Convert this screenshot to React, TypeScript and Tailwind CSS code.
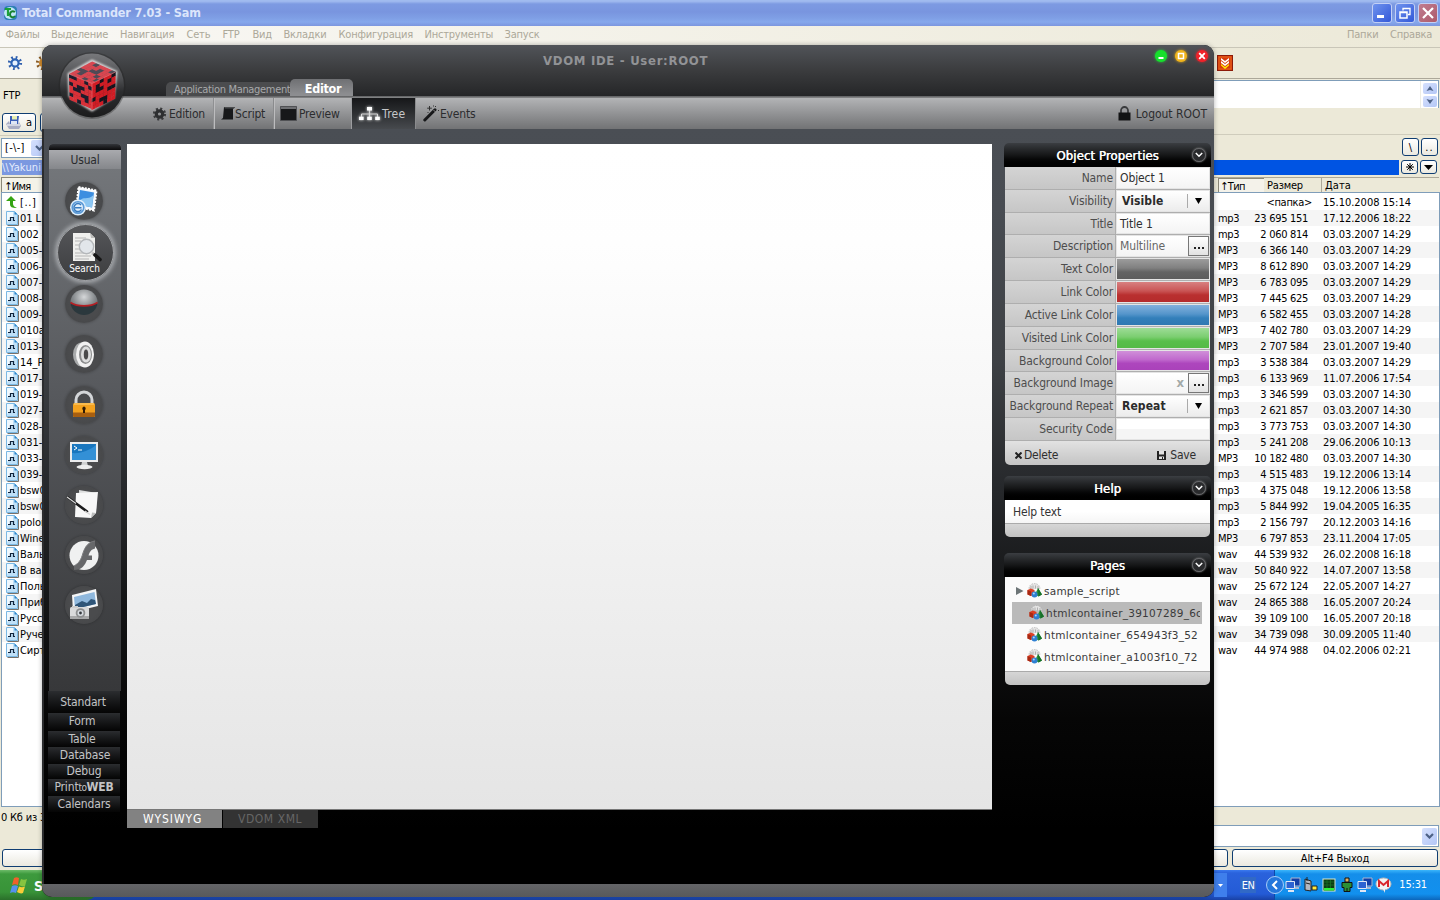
import React from "react";

const UI = "font-['DejaVu_Sans_Condensed','DejaVu_Sans',sans-serif]";

const menu = [
  ["Файлы", "w-[45.5px]"],
  ["Выделение", "w-[69px]"],
  ["Навигация", "w-[66.5px]"],
  ["Сеть", "w-[36px]"],
  ["FTP", "w-[30px]"],
  ["Вид", "w-[31px]"],
  ["Вкладки", "w-[55px]"],
  ["Конфигурация", "w-[86px]"],
  ["Инструменты", "w-[80px]"],
  ["Запуск", "w-[50px]"],
];

const names = [
  "01 L.", "002 -", "005-", "006-", "007-", "008-", "009-", "010a", "013-", "14_P", "017-", "019-", "027-", "028-",
  "031-", "033-", "039-", "bsw0", "bsw0", "polon", "Wine", "Валь", "В ва", "Поль", "Приб", "Русс", "Руче", "Сирт",
];

const files = [
  ["", "<папка>", "15.10.2008 15:14"],
  ["mp3", "23 695 151", "17.12.2006 18:22"],
  ["mp3", "2 060 814", "03.03.2007 14:29"],
  ["MP3", "6 366 140", "03.03.2007 14:29"],
  ["MP3", "8 612 890", "03.03.2007 14:29"],
  ["MP3", "6 783 095", "03.03.2007 14:29"],
  ["MP3", "7 445 625", "03.03.2007 14:29"],
  ["MP3", "6 582 455", "03.03.2007 14:28"],
  ["MP3", "7 402 780", "03.03.2007 14:29"],
  ["MP3", "2 707 584", "23.01.2007 19:40"],
  ["mp3", "3 538 384", "03.03.2007 14:29"],
  ["mp3", "6 133 969", "11.07.2006 17:54"],
  ["mp3", "3 346 599", "03.03.2007 14:30"],
  ["mp3", "2 621 857", "03.03.2007 14:30"],
  ["mp3", "3 773 753", "03.03.2007 14:30"],
  ["mp3", "5 241 208", "29.06.2006 10:13"],
  ["MP3", "10 182 480", "03.03.2007 14:30"],
  ["mp3", "4 515 483", "19.12.2006 13:14"],
  ["mp3", "4 375 048", "19.12.2006 13:58"],
  ["mp3", "5 844 992", "19.04.2005 16:35"],
  ["mp3", "2 156 797", "20.12.2003 14:16"],
  ["MP3", "6 797 853", "23.11.2004 17:05"],
  ["wav", "44 539 932", "26.02.2008 16:18"],
  ["wav", "50 840 922", "14.07.2007 13:58"],
  ["wav", "25 672 124", "22.05.2007 14:27"],
  ["wav", "24 865 388", "16.05.2007 20:24"],
  ["wav", "39 109 100", "16.05.2007 20:18"],
  ["wav", "34 739 098", "30.09.2005 11:40"],
  ["wav", "44 974 988", "04.02.2006 02:21"],
];

const TITLE_BG =
  "bg-[linear-gradient(to_bottom,#9db9ee_0px,#a3bdf0_1px,#7d9ae2_4px,#7995df_12px,#7f9fe5_18px,#86a8ec_22px,#7c96de_26px)]";

function Title() {
  const box = "w-[20px] h-[20px] rounded-[3px] border border-[#c3d0f5] flex items-center justify-center";
  return (
    <div className={`h-[26px] shrink-0 flex items-center pl-[3px] pr-[2px] ${TITLE_BG}`}>
      <svg width="15" height="16" viewBox="0 0 15 16" className="shrink-0">
        <rect x="1" y="1" width="13" height="14" rx="4" fill="#2c7fb5" />
        <circle cx="7" cy="8" r="6" fill="#bfe6f6" />
        <path d="M2 4h6M5 4v7" stroke="#1ba03a" strokeWidth="2.2" />
        <path d="M12 7c-3-2-5 0-5 2.500s3 4 5 1.500" stroke="#17822f" strokeWidth="2" fill="none" />
      </svg>
      <span className="ml-[4px] text-[12.5px] font-bold text-[#dbe5fb] whitespace-nowrap tracking-[-0.13px]">Total Commander 7.03 - Sam</span>
      <div className="ml-auto flex gap-[3px]">
        <div className={`${box} bg-[linear-gradient(135deg,#6f93ee,#3358d8)]`}>
          <div className="w-[7px] h-[3px] bg-white mt-[7px] mr-[4px]" />
        </div>
        <div className={`${box} bg-[linear-gradient(135deg,#6f93ee,#3358d8)]`}>
          <svg width="12" height="12" viewBox="0 0 12 12" fill="none" stroke="#fff">
            <path d="M4 3.500V1.500h7v6H9" strokeWidth="1.300" />
            <path d="M1 5h7v6H1z M1 5.500h7" strokeWidth="1.500" />
          </svg>
        </div>
        <div className={`${box} bg-[linear-gradient(135deg,#c07d90,#ad5a6a)]`}>
          <svg width="12" height="12" viewBox="0 0 12 12" stroke="#fff" strokeWidth="2.200">
            <path d="M1 1l10 10M11 1L1 11" />
          </svg>
        </div>
      </div>
    </div>
  );
}

function XpButton({ children, className }: { children?: React.ReactNode; className: string }) {
  return (
    <div className={`rounded-[3px] border border-[#0f3d72] bg-gradient-to-b from-white to-[#ebe9e0] flex items-center justify-center shrink-0 ${className}`}>
      {children}
    </div>
  );
}

function Chevron({ solid = false, up = false, className = "" }: { solid?: boolean; up?: boolean; className?: string }) {
  return (
    <div className={`rounded-[2px] bg-gradient-to-br from-[#d5e0fd] to-[#b4c7f6] flex items-center justify-center ${className}`}>
      {solid ? (
        <svg width="8" height="5" viewBox="0 0 8 5" fill="#4d6185"><path d={up ? "M.5 5L4 0l3.500 5L4 4z" : "M.5 0L4 5 7.500 0 4 1z"} /></svg>
      ) : (
        <svg width="9" height="6" viewBox="0 0 9 6" fill="none" stroke="#4d6185" strokeWidth="2.200"><path d="M1 1l3.500 3.500L8 1" /></svg>
      )}
    </div>
  );
}

function FileIcon() {
  return (
    <svg width="13" height="15" viewBox="0 0 13 15" className="shrink-0">
      <path d="M1.500 14.500h11V4" stroke="#77716a" fill="none" />
      <path d="M.5.5h8l3 3v10H.5z" fill="#bfe0f8" stroke="#7ab8e4" />
      <path d="M1 1h6v5L1 11z" fill="#eff8fe" />
      <path d="M8.500.5v3h3z" fill="#2d86cc" />
      <path d="M2 9.500h2.500v-3h3v3H9" stroke="#10233c" strokeWidth="1.200" fill="none" />
    </svg>
  );
}

function LeftSide() {
  return (
    <div className="w-[42px] shrink-0 flex flex-col text-black">
      <div className="h-[31px] shrink-0 flex items-center pl-[8px] border-b border-[#aca899] bg-[#f6f5f0]">
        <svg width="34" height="16" viewBox="0 0 34 16" className="shrink-0">
          <g fill="none">
            <circle cx="7" cy="8" r="5.600" stroke="#2f5fae" strokeWidth="3" strokeDasharray="1.700 2.700" />
            <circle cx="7" cy="8" r="3.600" stroke="#2b62b4" strokeWidth="2.200" fill="#e5f1ff" />
            <circle cx="35" cy="8" r="5.600" stroke="#8a5a20" strokeWidth="3" strokeDasharray="1.700 2.700" />
            <circle cx="35" cy="8" r="4" fill="#d08a2c" />
          </g>
        </svg>
      </div>
      <div className="h-[31px] shrink-0 pl-[3px] pt-[10px] text-[11px] leading-[14px]">FTP</div>
      <div className="h-[25px] shrink-0 flex gap-[4px] pt-[3px] pl-[2px]">
        <XpButton className="w-[34px] h-[19px] gap-[4px]">
          <svg width="16" height="15" viewBox="0 0 16 15">
            <path d="M4 1h9l-1 8H4z" fill="#3c5fb8" />
            <path d="M6 1h5v3.500H6z" fill="#e8f0b0" />
            <path d="M5 6h6v4H5z" fill="#dfe6f5" />
            <path d="M0 9l3-3 1 3h8l1-2 2 4-2 3H3z" fill="#a9adc4" />
            <path d="M1 10h13" stroke="#fff" />
          </svg>
          <span className="text-[11px] pt-[2px]">a</span>
        </XpButton>
        <XpButton className="w-[34px] h-[19px]" />
      </div>
      <div className="h-[24px] shrink-0 border-t border-[#cfccbc] pt-[2px] pl-[1px]">
        <div className="w-[49px] h-[20px] border border-[#7f9db9] bg-white flex items-center pl-[3px]">
          <span className="text-[11px] w-[26px] shrink-0 tracking-[0.3px]">[-\-]</span>
          <Chevron className="w-[16px] h-[16px] shrink-0" />
        </div>
      </div>
      <div className="h-[18px] shrink-0 pt-[1px] pl-[2px]">
        <div className="h-[15px] bg-[#7b98e0] text-[#e4ecfd] text-[11px] leading-[16px] tracking-[0.15px] whitespace-nowrap">\\Yakunin</div>
      </div>
      <div className="h-[15px] shrink-0 ml-[1px] border-l border-t border-[#8b8878] pl-[2px] bg-[#f4f2e8] text-[11px] leading-[17px] tracking-[-0.6px] whitespace-nowrap">↑Имя</div>
      <div className="h-[615px] shrink-0 ml-[1px] border-l border-y border-[#7f9db9] bg-white text-[11px] leading-[16px] tracking-[-0.05px]">
        <div className="h-[17px] pt-[1px] flex items-center pl-[4px] whitespace-nowrap">
          <svg width="11" height="12" viewBox="0 0 11 12" className="shrink-0">
            <path d="M5 0l5 5H7v3c0 2 2 3 4 4-5 0-7-1-7-4V5H0z" fill="#35a413" />
          </svg>
          <span className="ml-[3px] pt-[1px] tracking-[0.6px]">[..]</span>
        </div>
        {names.map((n, i) => (
          <div key={i} className={`h-[16px] flex items-center pl-[4px] whitespace-nowrap ${i % 2 ? "bg-white" : "bg-[#f5f5f5]"}`}>
            <FileIcon />
            <span className="ml-[1px] pt-[1px]">{n}</span>
          </div>
        ))}
      </div>
      <div className="h-[42px] shrink-0 pl-[1px] pt-[3px] text-[11px] leading-[16px] tracking-[-0.2px] whitespace-nowrap">0 Кб из 3</div>
      <XpButton className="w-[60px] h-[18px] ml-[2px]" />
    </div>
  );
}

function RightSide() {
  return (
    <div className="w-[226px] shrink-0 flex flex-col overflow-hidden text-black">
      <div className="h-[31px] shrink-0 flex items-center pl-[3px] border-b border-[#aca899]">
        <svg width="16" height="16" viewBox="0 0 16 16">
          <rect x=".5" y=".5" width="15" height="15" fill="#d63a0c" stroke="#8d1a08" />
          <rect x="2" y="2" width="12" height="12" fill="none" stroke="#e8661c" />
          <path d="M4 3l4 3 4-3v2L8 8 4 5zM4 6l4 3 4-3v2l-4 3-4-3z" fill="#fff" />
          <path d="M4 9l4 3 4-3v1.500L8 14l-4-3.500z" fill="#ffe60a" />
        </svg>
      </div>
      <div className="h-[31px] shrink-0 pr-[1px]">
        <div className="h-[28px] mt-[1px] bg-white border-t border-r border-[#7f9db9] flex justify-end">
          <div className="w-[18px] flex flex-col items-center gap-[2px] pt-[2px] border-l border-[#eeede5]">
            <Chevron solid up className="w-[14px] h-[11px]" />
            <Chevron solid className="w-[14px] h-[11px]" />
          </div>
        </div>
      </div>
      <div className="h-[25px] shrink-0 border-b border-[#cfccbc]" />
      <div className="h-[24px] shrink-0 flex justify-end gap-[2px] pt-[3px] pr-[2px] text-[11px]">
        <XpButton className="w-[17px] h-[18px] pt-[3px]">\</XpButton>
        <XpButton className="w-[17px] h-[18px] pt-[3px] tracking-[1px]">..</XpButton>
      </div>
      <div className="h-[18px] shrink-0 flex pt-[1px] pr-[2px]">
        <div className="w-[185px] h-[15px] bg-[#0054e3] mr-[2px] shrink-0" />
        <XpButton className="w-[17px] h-[14px] mr-[2px]">
          <svg width="8" height="8" viewBox="0 0 8 8" stroke="#000">
            <path d="M4 0v8M0 4h8M1.200 1.200l5.600 5.600M6.800 1.200L1.200 6.800" />
          </svg>
        </XpButton>
        <XpButton className="w-[17px] h-[14px]">
          <svg width="9" height="5" viewBox="0 0 9 5"><path d="M0 0h9L4.500 5z" /></svg>
        </XpButton>
      </div>
      <div className="h-[15px] shrink-0 flex border-t border-[#aca899] text-[11px] leading-[16px] tracking-[-0.2px] whitespace-nowrap mr-[1px]">
        <div className="w-[5px] border-r border-[#8b8878]" />
        <div className="w-[45px] border-t border-[#8b8878] bg-[#f4f2ea] pl-[1px] tracking-[-0.6px]">↑Тип</div>
        <div className="w-[58px] border-r border-[#aca899] pl-[3px]">Размер</div>
        <div className="pl-[3px] tracking-[0.1px]">Дата</div>
      </div>
      <div className="h-[615px] shrink-0 border-r border-y border-[#7f9db9] bg-white text-[11px] leading-[17px] tracking-[-0.3px] pt-[1px]">
        {files.map((f, i) => (
          <div key={i} className={`h-[16px] flex whitespace-pre ${i % 2 ? "bg-[#f5f5f5]" : "bg-white"}`}>
            <div className="w-[34px] pl-[4px] shrink-0">{f[0]}</div>
            <div className={`w-[60px] text-right shrink-0 ${i === 0 ? "translate-x-[4px]" : ""}`}>{f[1]}</div>
            <div className="pl-[15px] tracking-[-0.02px]">{f[2]}</div>
          </div>
        ))}
      </div>
      <div className="h-[18px] shrink-0" />
      <div className="h-[22px] shrink-0 mr-[1px] border border-l-0 border-[#7f9db9] bg-white flex justify-end items-center pr-[1px]">
        <Chevron className="w-[15px] h-[17px]" />
      </div>
      <div className="flex gap-[4px] pt-[2px] text-[11px] tracking-[-0.15px] -ml-[20px]">
        <XpButton className="w-[34px] h-[18px]" />
        <XpButton className="w-[206px] h-[18px] pt-[2px]">Alt+F4 Выход</XpButton>
      </div>
    </div>
  );
}

function Monitors() {
  return (
    <svg width="16" height="16" viewBox="0 0 16 16">
      <path d="M6 1h9v8H6z" fill="#123fa8" stroke="#a9b6d0" />
      <path d="M1 4.500h8.500v7H1z" fill="#2b62d2" stroke="#dfe7f5" />
      <path d="M3 14h6" stroke="#dfe7f5" strokeWidth="2" />
      <path d="M10 11h4" stroke="#a9b6d0" strokeWidth="2" />
    </svg>
  );
}

function Taskbar() {
  return (
    <div className="h-[30px] shrink-0 mt-auto flex bg-[linear-gradient(to_bottom,#3a7af0_0px,#2a62dc_3px,#245bd6_24px,#1941a5_30px)]">
      <div className="w-[97px] h-full shrink-0 flex items-center pl-[10px] rounded-r-[10px] bg-[linear-gradient(to_bottom,#6dbb69_0px,#3d9a3d_4px,#389338_22px,#2a6f2a_30px)]">
        <svg width="19" height="17" viewBox="0 0 19 17">
          <path d="M4 1c2-1 3-1 5 0L8 8C6 7 4 7 2 8z" fill="#f0602c" />
          <path d="M11 2c2 1 4 1 6 0l-2 7c-2 1-4 0-6-1z" fill="#86c440" />
          <path d="M2 9c2-1 4-1 6 0l-2 7c-2-1-4-1-6 0z" fill="#5591ef" />
          <path d="M9 9.500c2 1 4 1 6 0l-2 6.500c-2 1-4 0-6-1z" fill="#f8cc38" />
        </svg>
        <span className="ml-[5px] text-white font-bold text-[14px] pt-[2px]">Start</span>
      </div>
      <div className="ml-auto w-[226px] h-full flex items-center">
        <div className="w-[13px] h-[24px] bg-[#3f7fec] flex items-center justify-center">
          <svg width="5" height="3" viewBox="0 0 5 3"><path d="M0 0h5L2.500 3z" fill="#fff" /></svg>
        </div>
        <div className="w-[16px] h-[16px] ml-[13px] mr-[19px] bg-[#3169c6] text-white text-[11px] leading-[17px] tracking-[-0.7px] text-center">EN</div>
        <div className="h-full flex-1 flex items-center -ml-[1px] pr-[13px] border-l border-[#0d48a8] bg-[linear-gradient(to_bottom,#3ab5fb_0px,#148eea_4px,#1290ee_24px,#0c66bb_30px)]">
          <div className="-ml-[9px] w-[18px] h-[18px] shrink-0 rounded-full border border-[#a8cdf8] bg-[#2477dc] flex items-center justify-center">
            <svg width="8" height="10" viewBox="0 0 8 10" fill="none" stroke="#fff" strokeWidth="2"><path d="M6 1L2 5l4 4" /></svg>
          </div>
          <div className="flex gap-[2px] items-center shrink-0 ml-[1px]">
            <Monitors />
            <svg width="16" height="16" viewBox="0 0 16 16">
              <path d="M2 2l6 2v10l-6-1z" fill="#b5b8c0" stroke="#222" />
              <path d="M4 0v4M3 6l4 1" stroke="#222" />
              <path d="M9 9h5v4H9z" fill="#ffe93b" stroke="#222" />
            </svg>
            <svg width="16" height="16" viewBox="0 0 16 16">
              <rect x="2" y="2" width="12" height="12" fill="#0b3d13" stroke="#d8e8d0" />
              <path d="M3 11h10v2.500H3z" fill="#2bf03a" />
              <path d="M3 5h10M3 8h10M6 3v8M9.500 3v8" stroke="#1d7a2a" strokeWidth=".7" />
            </svg>
            <svg width="16" height="16" viewBox="0 0 16 16">
              <path d="M6 1h4v4H6z" fill="#e0b064" stroke="#111" />
              <path d="M3 5.500h10v5h-2v4H5v-4H3z" fill="#2b8f35" stroke="#111" />
              <path d="M8 11v4" stroke="#111" />
            </svg>
            <Monitors />
            <svg width="17" height="16" viewBox="0 0 17 16">
              <ellipse cx="8.500" cy="7" rx="7.500" ry="6" fill="#f3f3f3" stroke="#b9babd" />
              <path d="M4 10V4l4.500 4L13 4v6" stroke="#d9262c" strokeWidth="2" fill="none" />
              <path d="M8 12l2 4v-4z" fill="#eee" />
            </svg>
          </div>
          <span className="ml-auto text-white text-[11px] tracking-[-0.15px] pt-[1px]">15:31</span>
        </div>
      </div>
    </div>
  );
}

const topFace = ["RRKRRR", "RKKRRK", "RRRKRR", "KRRKKR", "RRKRRR", "RKRRRK"];
const leftFace = ["KKRRKR", "RRRRRK", "KRKKRR", "RKKRRR", "RRRKKR", "KRRRKR", "RRKRRR"];
const rightFace = ["RRKRRK", "RKRRKR", "RKKRRR", "RRRRKK", "KRRRRR", "RRKKRR", "RRRKRR"];

function Face({ rows, m, dark, light }: { rows: string[]; m: string; dark: string; light: string }) {
  return (
    <g transform={m}>
      {rows.flatMap((r, y) =>
        r.split("").map((c, x) => (
          <rect key={`${x}-${y}`} x={x / r.length} y={y / rows.length} width={1 / r.length + 0.01} height={1 / rows.length + 0.01} fill={c === "K" ? dark : light} />
        )),
      )}
    </g>
  );
}

function Logo() {
  return (
    <svg width="70" height="70" viewBox="0 0 70 70" className="absolute left-[15px] top-[5px]">
      <defs>
        <linearGradient id="lg" x1="0" y1="0" x2="0" y2="1">
          <stop offset="0" stopColor="#77787b" />
          <stop offset=".4" stopColor="#4d4e51" />
          <stop offset=".6" stopColor="#2c2d2f" />
          <stop offset="1" stopColor="#1b1b1c" />
        </linearGradient>
        <filter id="gl" x="-30%" y="-30%" width="160%" height="160%"><feGaussianBlur stdDeviation="1.300" /></filter>
      </defs>
      <circle cx="35" cy="35.500" r="33.500" fill="#222" opacity=".35" />
      <circle cx="35" cy="35.500" r="32" fill="url(#lg)" />
      <path d="M12 24L35 11l24 11-3 25-21 13-22-14z" fill="none" stroke="#e8e8e8" strokeWidth="2.500" filter="url(#gl)" />
      <Face rows={topFace} m="matrix(23 -12.500 24 10.500 12 24)" dark="#4f4a56" light="#d84650" />
      <Face rows={leftFace} m="matrix(23 9.500 .5 25.500 12 24)" dark="#1d1d2c" light="#d83038" />
      <Face rows={rightFace} m="matrix(23.500 -11.500 -.5 26.500 35 33.500)" dark="#17131c" light="#d01c24" />
      <path d="M12 24l23 9.500L58.500 22M35 33.500V60" stroke="#f07a80" strokeWidth=".6" fill="none" />
    </svg>
  );
}

function Light({ kind }: { kind: "min" | "max" | "close" }) {
  const bg = kind === "min" ? "bg-[#16e02c] shadow-[0_0_3px_#1fd83a]" : kind === "max" ? "bg-[#f0b41c] shadow-[0_0_3px_#f0b41c]" : "bg-[#f0222a] shadow-[0_0_3px_#e8222a]";
  return (
    <div className={`w-[12px] h-[12px] rounded-full flex items-center justify-center ${bg}`}>
      <svg width="10" height="10" viewBox="0 0 10 10" stroke="#fff" fill="none">
        {kind === "min" && <path d="M2.500 7h5" strokeWidth="1.800" />}
        {kind === "max" && <rect x="2.500" y="2.500" width="5" height="5" strokeWidth="1.500" />}
        {kind === "close" && <path d="M2.200 2.200l5.600 5.600M7.800 2.200L2.200 7.800" strokeWidth="1.800" />}
      </svg>
    </div>
  );
}

function Toolbar() {
  const txt = "text-[12px] text-[#2b2c2e] tracking-[-0.2px] whitespace-nowrap";
  return (
    <div className="h-[31px] shrink-0 flex items-center pl-[103px] pr-[7px] bg-gradient-to-b from-[#b3b4b6] to-[#727375] shadow-[0_2px_5px_rgba(0,0,0,.35)]">
      <div className="w-[69px] h-full flex items-center border-r border-[#8f9092] pl-[7px]">
        <svg width="15" height="14" viewBox="0 0 15 14" fill="none">
          <circle cx="7.500" cy="7" r="5.300" stroke="#3a3b3d" strokeWidth="2.600" strokeDasharray="2 2.163" />
          <circle cx="7.500" cy="7" r="3.200" stroke="#2e2f31" strokeWidth="3.200" />
        </svg>
        <span className={`ml-[2px] ${txt}`}>Edition</span>
      </div>
      <div className="w-[60px] h-full flex items-center border-r border-[#8a8b8d] border-l border-l-[#bcbcbe] pl-[6px]">
        <svg width="14" height="15" viewBox="0 0 14 15">
          <path d="M3 1h11l-2 2v10.500H0l2-1.500z" fill="#17181a" />
          <path d="M3 1h11l-1 1.500H4z" fill="#4b4c4e" />
        </svg>
        <span className={`${txt}`}>Script</span>
      </div>
      <div className="w-[77px] h-full flex items-center border-l border-[#bcbcbe] pl-[5px]">
        <svg width="17" height="15" viewBox="0 0 17 15">
          <path d="M.5.5h16v14H.5z" fill="#17181a" stroke="#505154" />
          <path d="M1 1h15v2H1z" fill="#6e6f72" />
        </svg>
        <span className={`ml-[2px] ${txt}`}>Preview</span>
      </div>
      <div className="w-[65px] h-full flex items-center bg-gradient-to-b from-[#161719] to-[#474a4e] pl-[6px] border-l border-r border-l-[#9c9da0] border-r-[#8a8b8d]">
        <svg width="23" height="17" viewBox="0 0 23 17" className="drop-shadow-[0_0_1.5px_#ffffff]">
          <path d="M11.500 3v9M3.500 13V9h16v4" stroke="#d8d8d8" strokeWidth="1" fill="none" />
          <path d="M9 2h5v3.500H9zM1 11.700h4.600V15H1zM9.200 11.700h4.600V15H9.200zM17.200 11.700h4.600V15h-4.600z" fill="#fff" />
        </svg>
        <span className="ml-[1px] text-[12px] text-[#c6c7c9] tracking-[0.3px]">Tree</span>
      </div>
      <div className="flex items-center pl-[7px]">
        <svg width="17" height="17" viewBox="0 0 17 17">
          <path d="M1.800 15L12 4.800" stroke="#17181a" strokeWidth="3" strokeLinecap="round" />
          <path d="M10.500 5l2 2" stroke="#888" />
          <path d="M6.500 1v4.500M4.200 3.200h4.600M12 1l1 1M15 5l1 1M4.500 7l1 1M10 1h1" stroke="#333" />
        </svg>
        <span className={txt}>Events</span>
      </div>
      <div className="ml-auto flex items-center">
        <svg width="13" height="15" viewBox="0 0 13 15">
          <path d="M3 7V4.500a3.500 3.500 0 017 0V7" stroke="#3a3b3d" strokeWidth="1.800" fill="none" />
          <path d="M.5 6.500h12v8H.5z" fill="#121314" />
        </svg>
        <span className="ml-[5px] text-[12px] text-[#2b2c2e] tracking-[-0.02px] whitespace-nowrap">Logout ROOT</span>
      </div>
    </div>
  );
}

function SideIcon({ children }: { children: React.ReactNode }) {
  return (
    <div className="h-[50.2px] shrink-0 flex justify-center items-center">
      <div className="w-[38px] h-[38px] -ml-[2px] rounded-full bg-[radial-gradient(circle,#4a4b4d_55%,#434446_100%)] shadow-[0_0_3px_rgba(0,0,0,.3)] flex items-center justify-center">
        <svg width="34" height="34" viewBox="0 0 34 34" className="shrink-0 overflow-visible">{children}</svg>
      </div>
    </div>
  );
}

function Sidebar() {
  const cats = [
    ["Standart", "h-[22px] pl-0 pr-[2px]"],
    ["Form", "h-[18px] pr-[4px] pb-[2px]"],
    ["Table", "h-[16px] pr-[4px]"],
    ["Database", "h-[17px] pl-[2px]"],
    ["Debug", "h-[15px]"],
    ["PrinttoWEB", "h-[17px]"],
    ["Calendars", "h-[16px]"],
  ];
  return (
    <div className="w-[72px] shrink-0 flex flex-col">
      <div className="h-[547px] shrink-0 flex flex-col bg-gradient-to-b from-[#76797d] via-[#54565a] to-[#37383a] rounded-t-[4px] overflow-hidden">
        <div className="h-[6px] shrink-0 bg-gradient-to-b from-[#33353a] to-[#0b0b0c]" />
        <div className="h-[19px] shrink-0 mb-[7px] bg-gradient-to-b from-[#a9aaae] to-[#85878b] text-center text-[12px] leading-[21px] text-[#2a2b2d] tracking-[-0.2px]">Usual</div>
        <SideIcon>
          <g transform="translate(-.5 1)">
            <path d="M12 2l18 3.500-2.500 20L10 22z" fill="#f4f7fb" stroke="#fff" strokeWidth="2" strokeDasharray="2 1.200" />
            <path d="M13.500 5l14 2.500-2 15-14-3z" fill="#3c8ee0" />
            <path d="M12 17c5-7 9-1 15-7l-1.500 12.500-14-3z" fill="#8cc6f2" />
            <circle cx="11.500" cy="22.500" r="8" fill="#dfeefb" />
            <circle cx="11.500" cy="22.500" r="5.800" fill="none" stroke="#5b9ad8" strokeWidth="1.600" />
            <path d="M14.500 20a4 4 0 10.500 4.500M8.500 22.800h6.500" stroke="#3a7cc0" strokeWidth="1.500" fill="none" />
          </g>
        </SideIcon>
        <div className="h-[53px] shrink-0 flex justify-center items-center">
          <div className="w-[57px] h-[57px] shrink-0 rounded-full bg-gradient-to-b from-[#56575a] to-[#3c3d3f] border border-[#a4a6a9] shadow-[0_0_4px_2px_rgba(190,192,196,.75)] flex flex-col items-center">
            <svg width="30" height="32" viewBox="0 0 30 32" className="mt-[7px] ml-[4px] shrink-0">
              <path d="M1 1h17l5 5v23H1z" fill="#efefed" />
              <path d="M18 1l1 5h4z" fill="#bdbdbb" />
              <path d="M3 6h11M3 9h6M3 21h9M3 24h16M3 27h14M3 13h4M3 17h5" stroke="#b5b5b5" />
              <circle cx="14.500" cy="14.500" r="7.200" fill="#e2e6ea" stroke="#b4b7ba" strokeWidth="1.400" />
              <path d="M20 21l3 2" stroke="#bbb" strokeWidth="3" />
              <path d="M23 23l5 4.500" stroke="#161616" strokeWidth="3.600" strokeLinecap="round" />
            </svg>
            <span className="text-[10px] leading-[12px] text-white tracking-[-0.05px] -mt-[1px] mr-[1px]">Search</span>
          </div>
        </div>
        <SideIcon>
          <defs>
            <radialGradient id="ball" cx=".5" cy=".3" r=".7">
              <stop offset="0" stopColor="#d5d7d9" /><stop offset=".6" stopColor="#83878a" /><stop offset="1" stopColor="#54585b" />
            </radialGradient>
          </defs>
          <ellipse cx="17" cy="15" rx="13.500" ry="12.500" fill="url(#ball)" />
          <path d="M3.500 15.500c7 4.500 20 4.500 27 0a13.500 12.500 0 01-27 0z" fill="#2b383d" />
          <path d="M3.500 15.500c7 4.500 20 4.500 27 0" stroke="#b51f24" strokeWidth="1.600" fill="none" />
        </SideIcon>
        <SideIcon>
          <ellipse cx="14.500" cy="17.500" rx="8.500" ry="12" fill="#a9abac" />
          <ellipse cx="18" cy="17.500" rx="9" ry="13" fill="#f1f1f1" />
          <ellipse cx="18.500" cy="17.500" rx="6.500" ry="9.500" fill="#8a8b8c" />
          <ellipse cx="19" cy="17.500" rx="5" ry="8" fill="#dcdddd" />
          <ellipse cx="19" cy="17.500" rx="2.200" ry="5" fill="#4a4a4b" />
        </SideIcon>
        <SideIcon>
          <path d="M9 16V12a8 8 0 0116 0v4" stroke="#d4d6d8" strokeWidth="3" fill="none" />
          <rect x="6" y="15" width="22" height="14" rx="1.500" fill="#f4a21f" />
          <path d="M6 24.500h22v3c0 1-1 1.500-2 1.500H8c-1 0-2-.5-2-1.500z" fill="#a85f10" />
          <path d="M7 16h20" stroke="#ffd27a" />
          <path d="M17 18.500a2 2 0 011 3.500v3h-2v-3a2 2 0 011-3.500z" fill="#2e1a05" />
        </SideIcon>
        <SideIcon>
          <path d="M3 4h28v20H3z" fill="#ebeced" />
          <path d="M5 6h24v16H5z" fill="#1976be" />
          <path d="M5 15c9 1 18-3 24-8v15H5z" fill="#3f9be0" opacity=".7" />
          <path d="M7 8l3 2-3 2M11 12h4" stroke="#fff" fill="none" />
          <path d="M15 24h5l1 4h-7z" fill="#cfd1d2" />
          <ellipse cx="17.500" cy="29" rx="8" ry="2.200" fill="#eceded" />
        </SideIcon>
        <SideIcon>
          <path d="M12 2l18 3-1 20-16-1z" fill="#dddede" />
          <path d="M9 5l22-1-2 21-5 5-16-1z" fill="#f8f8f8" />
          <path d="M24 30l1-5.500 4 .5z" fill="#bcbdbd" />
          <path d="M1 9.500l19 14" stroke="#1c1c1d" strokeWidth="2.600" strokeLinecap="round" />
          <path d="M0 9l9 6.500M18 23l5 3.500" stroke="#d8d8d8" strokeWidth="1.200" />
        </SideIcon>
        <SideIcon>
          <circle cx="17" cy="17.500" r="14.500" fill="#f0f1f1" />
          <path d="M28 3c-7 1-10 6-12 12-2 7-4 10-9 13v4c8 0 11-5 13-10h5v-4.500h-3.500c1.500-4 2.500-6 6.500-7z" fill="#67686a" />
          <path d="M28 3c-7 1-10 6-12 12-2 7-4 10-9 13" stroke="#7c7d7f" fill="none" />
        </SideIcon>
        <SideIcon>
          <path d="M5 7l24-6 2 17-25 6z" fill="#f4f5f6" />
          <path d="M7 9L27.500 4l1.500 12-21 5z" fill="#8fb8dd" />
          <path d="M8 17l7-4 5 2 4-4 4 1 1 4-21 5z" fill="#2f5578" />
          <rect x="3" y="19" width="19" height="12" rx="1.500" fill="#d9dadb" />
          <path d="M5 18h6v2H5z" fill="#ccc" />
          <path d="M3 28h19v3H3z" fill="#a7a8a9" />
          <circle cx="13.500" cy="25" r="4.800" fill="#8d8f90" />
          <circle cx="13.500" cy="25" r="3" fill="#d6dbe0" />
          <circle cx="13.500" cy="25" r="1.400" fill="#34383c" />
        </SideIcon>
      </div>
      <div className="-ml-[1px] w-[72px] flex flex-col">
        {cats.map(([c, cl]) => (
          <div key={c} className={`shrink-0 flex items-center justify-center bg-gradient-to-b from-[#2b2d30] to-[#050505] text-[12px] leading-[15px] text-[#c3c4c6] tracking-[-0.15px] whitespace-nowrap ${cl}`}>
            {c === "PrinttoWEB" ? (
              <span className="tracking-[-0.15px]">Print<span className="text-[10px] tracking-[-0.5px]">to</span><b>WEB</b></span>
            ) : c}
          </div>
        ))}
      </div>
    </div>
  );
}

function PanelHead({ children }: { children: string }) {
  return (
    <div className="h-[24px] shrink-0 -mx-[1px] rounded-t-[5px] bg-gradient-to-b from-[#3b3e42] via-[#161718] to-black flex items-center justify-center relative">
      <span className="text-[13px] pt-[2px] text-white [text-shadow:0.5px_0_0_#fff] tracking-[0.1px] whitespace-nowrap">{children}</span>
      <div className="absolute right-[5px] top-[5px] w-[14px] h-[14px] rounded-full bg-[#2a2b2d] border border-[#66676a] shadow-[0_0_2px_#888] flex items-center justify-center">
        <svg width="8" height="6" viewBox="0 0 8 6" fill="none" stroke="#fff" strokeWidth="1.500"><path d="M.8 1L4 4.200 7.200 1" /></svg>
      </div>
    </div>
  );
}

const Foot = "bg-gradient-to-b from-[#d6d6d6] to-[#c2c2c2] rounded-b-[5px] border-t border-[#aaa] shrink-0";

function Select({ v }: { v: string }) {
  return (
    <div className="flex-1 flex items-center pl-[5px]">
      <b className="text-[12px] tracking-[0.1px] text-[#2b2b2b]">{v}</b>
      <div className="ml-auto w-[22px] h-[14px] border-l border-[#aaa] flex items-center justify-center">
        <svg width="7" height="6" viewBox="0 0 7 6"><path d="M0 0h7L3.500 6z" /></svg>
      </div>
    </div>
  );
}

function Dots() {
  return (
    <div className="ml-auto w-[21px] h-[20px] border border-[#777] bg-gradient-to-b from-[#fff] to-[#e2e2e2] flex items-end justify-center gap-[2px] pb-[6px]">
      <i className="w-[2px] h-[2px] bg-[#222]" />
      <i className="w-[2px] h-[2px] bg-[#222]" />
      <i className="w-[2px] h-[2px] bg-[#222]" />
    </div>
  );
}

function Properties() {
  const val = "pl-[3px] pt-[1px] text-[#2f2f2f] tracking-[-0.1px]";
  const rows: [string, React.ReactNode, string][] = [
    ["Name", <span className={val}>Object 1</span>, "bg-gradient-to-b from-white to-[#f4f4f4]"],
    ["Visibility", <Select v="Visible" />, "bg-gradient-to-b from-white to-[#ececec]"],
    ["Title", <span className={val}>Title 1</span>, "bg-gradient-to-b from-white to-[#f4f4f4]"],
    ["Description", <><span className="pl-[3px] text-[#666] tracking-[-0.1px]">Multiline</span><Dots /></>, "bg-gradient-to-b from-white to-[#f4f4f4]"],
    ["Text Color", null, "bg-[linear-gradient(to_bottom,#9c9c9c,#808080_45%,#636363_65%,#5c5c5c)]"],
    ["Link Color", null, "bg-[linear-gradient(to_bottom,#d88080,#c95454_45%,#b92f2f_65%,#b52c2c)]"],
    ["Active Link Color", null, "bg-[linear-gradient(to_bottom,#82b1dc,#5595cb_45%,#337fba_65%,#2f78b2)]"],
    ["Visited Link Color", null, "bg-[linear-gradient(to_bottom,#9edc97,#7bce70_45%,#58bf4a_65%,#54ba46)]"],
    ["Background Color", null, "bg-[linear-gradient(to_bottom,#d08fd9,#c069cd_45%,#ad46bd_65%,#aa42ba)]"],
    ["Background Image", <><span className="ml-auto mr-[4px] text-[13px] leading-[16px] font-bold text-[#a3aaa8]">x</span><div className="w-[21px] h-[20px] flex"><Dots /></div></>, "bg-gradient-to-b from-white to-[#f4f4f4]"],
    ["Background Repeat", <Select v="Repeat" />, "bg-gradient-to-b from-white to-[#ececec]"],
    ["Security Code", null, "bg-[linear-gradient(to_bottom,#fff_50%,#f5f5f5_52%)]"],
  ];
  return (
    <div className="shrink-0 flex flex-col">
      <PanelHead>Object Properties</PanelHead>
      {rows.map(([l, v, bg]) => (
        <div key={l} className="h-[22.83px] shrink-0 flex bg-[#aeaeae] text-[12px] tracking-[-0.13px] whitespace-nowrap">
          <div className="w-[110px] mb-[1px] mr-[1px] bg-gradient-to-b from-[#d4d4d4] to-[#c6c6c6] flex items-center justify-end pr-[2px] text-[#4d4d4d]">{l}</div>
          <div className="flex-1 mb-[1px] border border-[#e4e4e4] flex">
            <div className={`flex-1 flex items-center ${bg}`}>{v}</div>
          </div>
        </div>
      ))}
      <div className="h-[24px] shrink-0 rounded-b-[5px] bg-gradient-to-b from-[#e2e2e2] to-[#c4c4c4] flex items-center px-[10px] pr-[14px] pt-[5px] text-[12px] tracking-[-0.2px] text-[#2f2f2f]">
        <svg width="7" height="7" viewBox="0 0 7 7" stroke="#222" strokeWidth="2"><path d="M.5.500l6 6M6.500.500l-6 6" /></svg>
        <span className="ml-[2px]">Delete</span>
        <svg width="9" height="9" viewBox="0 0 9 9" className="ml-auto">
          <path d="M0 0h9v9H0z" fill="#222" /><path d="M2 0h5v3.500H2zM2 5.500h5V8H2z" fill="#e2e2e2" /><path d="M5 6h1v2H5z" fill="#222" />
        </svg>
        <span className="ml-[4px]">Save</span>
      </div>
    </div>
  );
}

function PageIcon() {
  return (
    <svg width="15" height="15" viewBox="0 0 15 15" className="shrink-0">
      <path d="M2 5.500a5.500 5 0 0111 0z" fill="#e4e4e4" stroke="#a4a4a4" strokeWidth=".6" strokeDasharray="1.500 1" />
      <path d="M4 3v2.500M6 2.500V5M8.500 2.500V5M11 3v2.500" stroke="#999" strokeWidth=".7" />
      <path d="M.5 7L4 5.500l3.500 1.500v4.500L4 13 .5 11.500z" fill="#dc3f24" />
      <path d="M.5 7L4 8.500V13L.5 11.500z" fill="#a82a14" />
      <path d="M11 5l4 6.500-3.500 2-3.500-2z" fill="#25903a" />
      <path d="M11 5l4 6.500-3.500 2z" fill="#17702a" />
      <circle cx="7.500" cy="11.500" r="3" fill="#2e7fd2" />
      <circle cx="6.800" cy="10.600" r="1" fill="#a8d4f8" />
    </svg>
  );
}

function Pages() {
  const items = ["sample_script", "htmlcontainer_39107289_6c", "htmlcontainer_654943f3_52", "htmlcontainer_a1003f10_72"];
  return (
    <div className="shrink-0 flex flex-col mt-[16px]">
      <PanelHead>Pages</PanelHead>
      <div className="h-[94px] shrink-0 bg-[#fbfbfb] px-[7px] pt-[3px]">
        {items.map((t, i) => (
          <div key={t} className={`h-[22px] w-[190px] flex items-center pl-[4px] pr-[2px] ${i === 1 ? "bg-[#bababa]" : ""}`}>
            <div className={`shrink-0 ${i === 1 ? "w-[13px]" : "w-[11px]"}`}>
              {i === 0 && <svg width="8" height="8" viewBox="0 0 8 8"><path d="M0 0l7.500 4L0 8z" fill="#6d7577" /></svg>}
            </div>
            <PageIcon />
            <div className="ml-[2px] overflow-hidden whitespace-nowrap text-[#3a3a3a] text-[10.5px] font-['DejaVu_Sans',sans-serif] leading-[16px] tracking-[0.24px]">{t}</div>
          </div>
        ))}
      </div>
      <div className={`h-[14px] ${Foot}`} />
    </div>
  );
}

function VdomWindow() {
  return (
    <div className="absolute left-[42px] top-[45px] w-[1172px] h-[852px] rounded-[10px] overflow-hidden bg-black flex flex-col shadow-[0_0_5px_rgba(0,0,0,.3)]">
      <div className="h-[51px] shrink-0 flex flex-col bg-gradient-to-b from-[#515459] via-[#3b3c3e] to-[#252628]">
        <div className="h-[34px] flex items-start pl-[501px] pr-[6.500px]">
          <span className="text-[13px] leading-[16px] mt-[8px] font-bold text-[#929396] tracking-[0.7px] whitespace-nowrap">VDOM IDE - User:ROOT</span>
          <div className="ml-auto flex gap-[8.500px] mt-[5px]">
            <Light kind="min" /><Light kind="max" /><Light kind="close" />
          </div>
        </div>
        <div className="flex-1 flex items-end pl-[124px]">
          <div className="w-[124px] h-[14px] rounded-tl-[5px] bg-[#4b4c4e] pl-[8px] text-[11px] leading-[16px] text-[#a7a8aa] tracking-[-0.33px] whitespace-nowrap">Application Management</div>
          <div className="w-[63px] h-[17px] rounded-t-[5px] bg-gradient-to-b from-[#6f7073] to-[#909194] pl-[3px] text-center text-[12.500px] leading-[19px] font-bold text-white tracking-[-0.3px]">Editor</div>
        </div>
      </div>
      <div className="h-[2px] shrink-0 bg-gradient-to-b from-[#5b5c5e] to-[#96979a]" />
      <Toolbar />
      <div className="flex-1 min-h-0 flex pt-[15px] pl-[5px] border-l-2 border-[#2b2c2e] bg-[linear-gradient(to_bottom,#4a4e54_0px,#484c52_80px,#3e4145_230px,#26282b_360px,#131415_480px,#060606_590px,#000_700px)]">
        <Sidebar />
        <div className="w-[865px] ml-[6px] shrink-0 flex flex-col">
          <div className="h-[666px] shrink-0 border-b border-[#777] bg-[linear-gradient(to_bottom,#fff_0%,#fefefe_15%,#e5e5e5_100%)]" />
          <div className="flex gap-[1px] text-[12px] leading-[18px]">
            <div className="w-[95px] h-[18px] bg-[#828282] text-white pl-[16px] tracking-[0.9px]">WYSIWYG</div>
            <div className="w-[95px] h-[18px] bg-[#333] text-[#666] pl-[15px] tracking-[0.55px]">VDOM XML</div>
          </div>
        </div>
        <div className="w-[205px] ml-[13px] -mt-[1px] shrink-0 flex flex-col">
          <Properties />
          <div className="shrink-0 flex flex-col mt-[11px]">
            <PanelHead>Help</PanelHead>
            <div className="h-[23px] shrink-0 bg-[linear-gradient(to_bottom,#fff_50%,#f5f5f5)] pl-[8px] text-[12px] leading-[25px] text-[#333] tracking-[-0.15px]">Help text</div>
            <div className={`h-[14px] ${Foot}`} />
          </div>
          <Pages />
        </div>
      </div>
      <div className="h-[13px] shrink-0 bg-gradient-to-b from-[#646568] to-[#58595b]" />
      <Logo />
    </div>
  );
}

export default function App() {
  return (
    <div className={`relative w-[1440px] h-[900px] overflow-hidden bg-[#ece9d8] flex flex-col ${UI}`}>
      <Title />
      <div className="h-[22px] shrink-0 flex items-center pl-[5.500px] pb-[2px] border-b border-[#c9c6b8] bg-gradient-to-r from-[#f9f8f5] to-[#ece9d8] text-[11px] text-[#aca899] tracking-[-0.2px] whitespace-nowrap">
        {menu.map(([m, w]) => (
          <div key={m} className={`shrink-0 ${w}`}>{m}</div>
        ))}
        <div className="ml-auto w-[43px]">Папки</div>
        <div className="w-[50px]">Справка</div>
      </div>
      <div className="h-[819px] shrink-0 flex justify-between">
        <LeftSide />
        <RightSide />
      </div>
      <Taskbar />
      <VdomWindow />
    </div>
  );
}
